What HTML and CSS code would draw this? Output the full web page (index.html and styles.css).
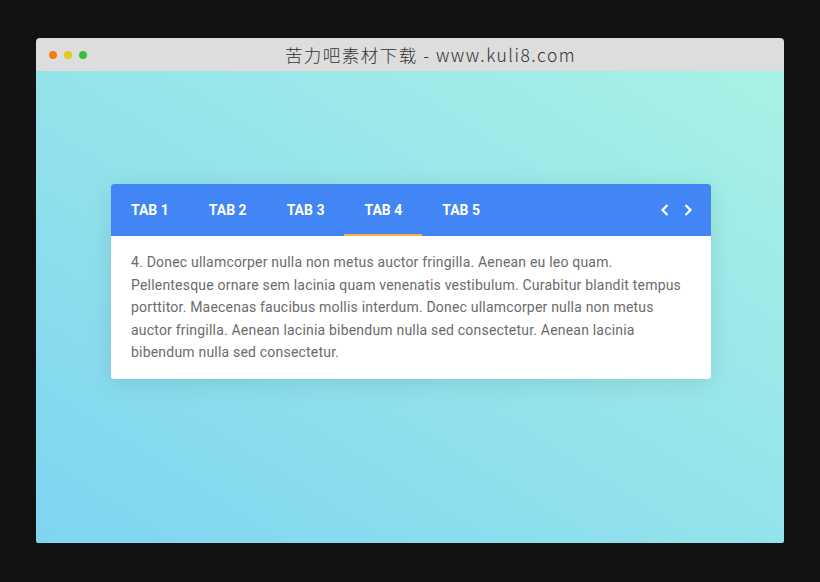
FILE: index.html
```html
<!DOCTYPE html>
<html lang="zh">
<head>
    <meta charset="UTF-8">
    <meta name="viewport" content="width=device-width, initial-scale=1.0">
    <title>苦力吧素材下载</title>
    <link rel="stylesheet" href="styles.css">
</head>
<body>
    <div class="window">
        <div class="titlebar">
            <div class="dots">
                <span class="dot orange"></span>
                <span class="dot yellow"></span>
                <span class="dot green"></span>
            </div>
            <div class="title">苦力吧素材下载 - www.kuli8.com</div>
        </div>

        <div class="stage">
            <div class="card">
                <div class="tabs">
                    <div class="tab">TAB 1</div>
                    <div class="tab">TAB 2</div>
                    <div class="tab">TAB 3</div>
                    <div class="tab active">TAB 4</div>
                    <div class="tab">TAB 5</div>
                    <div class="arrows">
                        <svg width="12" height="14" viewBox="0 0 12 14"><path d="M8.5 2 L3.5 7 L8.5 12" fill="none" stroke="#fff" stroke-width="2.2"/></svg>
                        <svg width="12" height="14" viewBox="0 0 12 14"><path d="M3.5 2 L8.5 7 L3.5 12" fill="none" stroke="#fff" stroke-width="2.2"/></svg>
                    </div>
                </div>
                <div class="panel">
                    4. Donec ullamcorper nulla non metus auctor fringilla. Aenean eu leo quam. Pellentesque ornare sem lacinia quam venenatis vestibulum. Curabitur blandit tempus porttitor. Maecenas faucibus mollis interdum. Donec ullamcorper nulla non metus auctor fringilla. Aenean lacinia bibendum nulla sed consectetur. Aenean lacinia bibendum nulla sed consectetur.
                </div>
            </div>
        </div>
    </div>
</body>
</html>
```

FILE: styles.css
```css
body {
    margin: 0;
    padding: 38px 36px 39px;
    background-color: #121214;
    font-family: Roboto, 'Noto Sans', sans-serif;
}

.window {
    width: 748px;
    border-radius: 4px 4px 2px 2px;
    overflow: hidden;
}

.titlebar {
    height: 33px;
    background-color: #dddddd;
    display: flex;
    align-items: center;
}

.dots {
    display: flex;
    gap: 7px;
    padding-left: 13px;
}

.dot {
    width: 8px;
    height: 8px;
    border-radius: 50%;
}

.orange { background-color: #f57f0c; }
.yellow { background-color: #e7c623; }
.green { background-color: #35c13c; }

.title {
    flex: 1;
    text-align: center;
    margin-left: -10px;
    font-family: 'Noto Sans CJK SC', sans-serif;
    font-size: 17.5px;
    font-weight: 300;
    color: #333;
    letter-spacing: 1.5px;
}

.stage {
    height: 472px;
    box-sizing: border-box;
    padding: 113px 0 0 2px;
    background: linear-gradient(to top right, #7fd5f1, #a8f2e5);
}

.card {
    width: 600px;
    margin: 0 auto;
    background-color: white;
    border-radius: 3px;
    overflow: hidden;
    box-shadow: 0 4px 24px rgba(0,0,0,0.1);
}

.tabs {
    display: flex;
    height: 52px;
    background-color: #4285f4;
    color: white;
}

.tab {
    padding: 2px 20px 0;
    display: flex;
    align-items: center;
    font-size: 14px;
    font-weight: bold;
    border-bottom: 2px solid transparent;
}

.tab.active {
    border-bottom-color: #f6b141;
}

.arrows {
    margin-left: auto;
    display: flex;
    align-items: center;
    gap: 11px;
    padding-right: 17px;
}

.panel {
    padding: 15px 20px;
    font-size: 14px;
    line-height: 22.5px;
    letter-spacing: 0.2px;
    color: #6b6b6b;
}
```
